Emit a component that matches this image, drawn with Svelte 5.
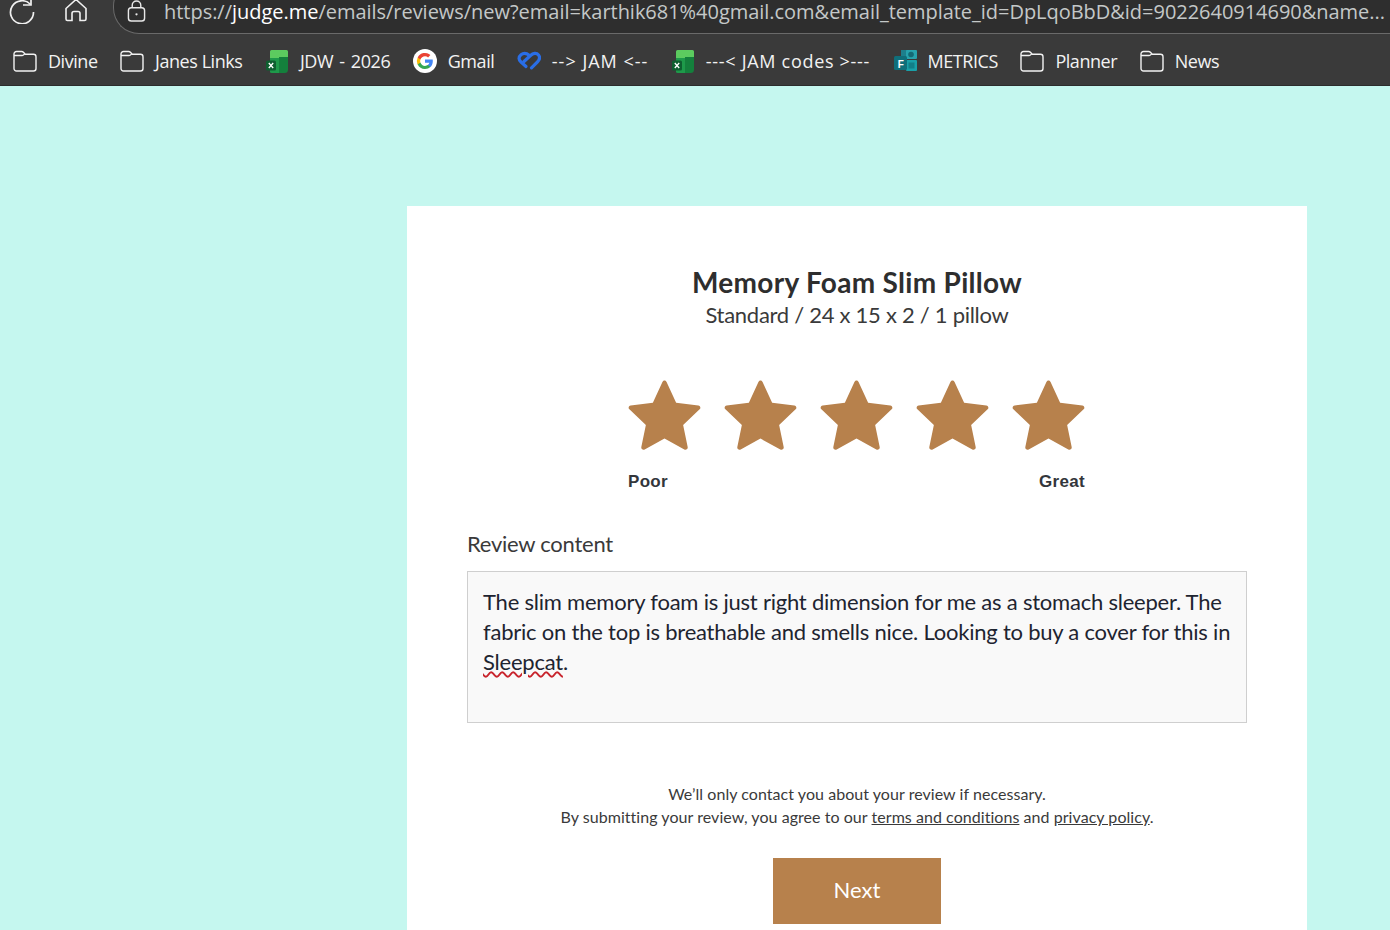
<script>
  const stars = [1, 2, 3, 4, 5];
</script>

{#snippet folder()}
  <svg class="bm-icon" viewBox="0 0 24 24" fill="none" stroke="#f2f2f2" stroke-width="1.4">
    <path d="M1 6.5V5a2.5 2.5 0 0 1 2.5-2.5h5.2c.7 0 1.2.3 1.7.8l1.900 1.900h8.200A2.500 2.500 0 0 1 23 7.700v11.800a2.500 2.500 0 0 1-2.500 2.500h-17A2.500 2.500 0 0 1 1 19.500V6.500h8.200c.8 0 1.300-.4 1.700-.9l1.400-1.400" />
  </svg>
{/snippet}

{#snippet excel()}
  <svg class="bm-icon" viewBox="0 0 24 24">
    <path d="M5 2.500A1.500 1.500 0 0 1 6.500 1H21.500A1.500 1.500 0 0 1 23 2.500V8H14v2H5z" fill="#5ccb5f" />
    <path d="M5 9h9v15H6.500A1.500 1.500 0 0 1 5 22.500z" fill="#1e9a4a" />
    <path d="M14 8h9v12.500a3.500 3.500 0 0 1-3.500 3.500H14z" fill="#14803c" />
    <rect x="1" y="11.500" width="10" height="10" rx="1.500" fill="#0e5f30" />
    <path d="M3.800 14l4.400 5M8.200 14l-4.400 5" stroke="#fff" stroke-width="1.300" />
  </svg>
{/snippet}

{#snippet star()}
  <svg class="star" viewBox="0 0 74 72">
    <path
      d="M37 1.500c1 0 1.700.6 2.100 1.500l9.700 21.200 22.500 2.600c2 .2 2.800 2.600 1.300 4L55.900 46.600 60.500 69c.4 2-1.700 3.400-3.400 2.400L37 60.400 16.900 71.400c-1.700 1-3.800-.4-3.400-2.400l4.600-22.400L1.400 30.800c-1.500-1.400-.7-3.800 1.300-4l22.500-2.600L34.900 3c.4-.9 1.100-1.500 2.100-1.500z"
      fill="#b7814c"
    />
  </svg>
{/snippet}

<div class="browser">
  <div class="toolbar">
    <svg class="nav-icon reload" viewBox="0 0 26 26" fill="none" stroke="#f0f0f0" stroke-width="1.700">
      <path d="M21.500 6.500A11.500 11.500 0 1 0 24.500 14" />
      <path d="M22 -1v8h-8" />
    </svg>
    <svg class="nav-icon home" viewBox="0 0 24 26" fill="none" stroke="#f0f0f0" stroke-width="1.600">
      <path d="M2 10.500 12 1.500l10 9V21a1.500 1.500 0 0 1-1.500 1.500h-4.500v-7a2 2 0 0 0-2-2h-4a2 2 0 0 0-2 2v7H3.500A1.500 1.500 0 0 1 2 21z" />
    </svg>
    <div class="address">
      <svg class="lock" viewBox="0 0 20 24" fill="none" stroke="#e8e8e8" stroke-width="1.500">
        <rect x="1.500" y="8" width="17" height="14" rx="3" />
        <path d="M5.500 8V5.500a4.500 4.500 0 0 1 9 0V8" />
        <circle cx="10" cy="15" r="1.200" fill="#e8e8e8" stroke="none" />
      </svg>
      <span class="url"><span class="dim">https://</span>judge.me<span class="dim">/emails/reviews/new?email=karthik681%40gmail.com&amp;email_template_id=DpLqoBbD&amp;id=9022640914690&amp;name...</span></span>
    </div>
  </div>

  <div class="bookmarks">
    <div class="bm">{@render folder()}<span>Divine</span></div>
    <div class="bm">{@render folder()}<span>Janes Links</span></div>
    <div class="bm">{@render excel()}<span class="jdw">JDW - 2026</span></div>
    <div class="bm">
      <svg class="bm-icon google" viewBox="0 0 24 24">
        <circle cx="12" cy="12" r="12" fill="#fff" />
        <path d="M19.800 12.200c0-.6 0-1.100-.1-1.600H12v3.100h4.400a3.800 3.800 0 0 1-1.600 2.400v2h2.600c1.500-1.400 2.400-3.400 2.400-5.900z" fill="#4285f4" />
        <path d="M12 20c2.200 0 4-.7 5.400-1.900l-2.600-2c-.7.500-1.700.8-2.800.8-2.100 0-3.900-1.400-4.600-3.400H4.700v2.100A8 8 0 0 0 12 20z" fill="#34a853" />
        <path d="M7.400 13.500a4.800 4.800 0 0 1 0-3V8.400H4.700a8 8 0 0 0 0 7.200z" fill="#fbbc05" />
        <path d="M12 7.200c1.200 0 2.300.4 3.100 1.200l2.300-2.300A8 8 0 0 0 4.700 8.400l2.700 2.100C8.100 8.600 9.900 7.200 12 7.200z" fill="#ea4335" />
      </svg>
      <span>Gmail</span>
    </div>
    <div class="bm">
      <svg class="bm-icon" viewBox="0 0 24 24" fill="none" stroke="#2a6ee6" stroke-width="3.200" stroke-linecap="round">
        <path d="M12.500 6.500C10 4.500 6.500 3.800 4 5.800 1.300 8 1.500 10.800 4 13l5 4.500" />
        <path d="M7 12.500 13.500 6.500c2.500-2.400 6-3 8-.5 1.800 2.300 1 4.800-1 6.800l-6 6" />
      </svg>
      <span class="spaced">--&gt; JAM &lt;--</span>
    </div>
    <div class="bm">{@render excel()}<span class="codes">---&lt; JAM codes &gt;---</span></div>
    <div class="bm">
      <svg class="bm-icon" viewBox="0 0 24 24">
        <rect x="8" y="1" width="9" height="9" fill="#1d7f8c" />
        <rect x="13" y="1" width="11" height="9" rx="1" fill="#27a3ad" />
        <circle cx="18" cy="5.500" r="2.800" fill="#146a75" />
        <rect x="13" y="11" width="11" height="11" rx="1" fill="#19a0a8" />
        <rect x="15.500" y="13.500" width="6" height="6" fill="#127f88" />
        <rect x="1" y="7" width="13" height="14" rx="1.500" fill="#0f6e7a" />
        <text x="7.500" y="18.500" class="f-mark">F</text>
      </svg>
      <span>METRICS</span>
    </div>
    <div class="bm">{@render folder()}<span>Planner</span></div>
    <div class="bm">{@render folder()}<span>News</span></div>
  </div>

  <main class="page">
    <section class="card">
      <header class="product">
        <h1>Memory Foam Slim Pillow</h1>
        <p>Standard / 24 x 15 x 2 / 1 pillow</p>
      </header>

      <div class="rating">
        <div class="stars">
          {#each stars as s (s)}
            {@render star()}
          {/each}
        </div>
        <div class="scale">
          <span>Poor</span>
          <span>Great</span>
        </div>
      </div>

      <div class="field-label">Review content</div>
      <div class="textarea">The slim memory foam is just right dimension for me as a stomach sleeper. The fabric on the top is breathable and smells nice. Looking to buy a cover for this in <span class="typo">Sleepcat</span>.</div>

      <div class="legal">
        <p>We’ll only contact you about your review if necessary.</p>
        <p>By submitting your review, you agree to our <u>terms and conditions</u> and <u>privacy policy</u>.</p>
      </div>

      <div class="actions">
        <button class="next">Next</button>
      </div>
    </section>
  </main>
</div>

<style>
  :global(body) {
    margin: 0;
    overflow: hidden;
  }

  .browser {
    width: 1390px;
    height: 930px;
    overflow: hidden;
    display: flex;
    flex-direction: column;
    font-family: "Lato", sans-serif;
  }

  /* Browser chrome */
  .toolbar {
    height: 43px;
    flex: none;
    background: #3a3a3a;
    display: flex;
    align-items: flex-start;
    padding-left: 9px;
    box-sizing: border-box;
    overflow: hidden;
  }

  .nav-icon {
    flex: none;
    margin-top: -2px;
  }

  .reload {
    width: 26px;
    height: 26px;
  }

  .home {
    width: 24px;
    height: 26px;
    margin-left: 29px;
  }

  .address {
    margin-left: 25px;
    margin-top: -20px;
    height: 54px;
    width: 1300px;
    flex: none;
    box-sizing: border-box;
    border: 1.5px solid #6a6a6a;
    border-right: none;
    border-radius: 26px 0 0 26px;
    background: #2e2e2e;
    display: flex;
    align-items: flex-end;
    padding: 0 0 8px 13px;
    color: #fff;
    overflow: hidden;
  }

  .lock {
    width: 19px;
    height: 23px;
    margin-bottom: 2px;
    flex: none;
  }

  .url {
    margin-left: 18px;
    font-family: "Open Sans", sans-serif;
    font-size: 20px;
    line-height: 26px;
    letter-spacing: -0.03px;
    white-space: nowrap;
  }

  .dim {
    color: #c4c8c8;
  }

  .bookmarks {
    height: 43px;
    flex: none;
    background: #3a3a3a;
    border-bottom: 1px solid #2c2c2c;
    box-sizing: border-box;
    display: flex;
    align-items: center;
    padding: 0 0 6px 13px;
    gap: 22.500px;
    color: #f2f2f2;
    font-family: "Open Sans", sans-serif;
    font-size: 18px;
    letter-spacing: -0.45px;
    white-space: nowrap;
  }

  .bm {
    display: flex;
    align-items: center;
    gap: 11px;
  }

  .jdw {
    word-spacing: 2px;
  }

  .spaced {
    letter-spacing: 1px;
  }

  .codes {
    letter-spacing: 0.7px;
  }

  .bm-icon {
    width: 24px;
    height: 24px;
    flex: none;
  }

  .f-mark {
    font-family: "Liberation Sans", sans-serif;
    font-size: 10px;
    font-weight: 700;
    fill: #fff;
    text-anchor: middle;
  }

  /* Page */
  .page {
    flex: 1;
    min-height: 0;
    background: #c5f7ef;
    padding: 120px 83px 0 407px;
    overflow: hidden;
  }

  .card {
    background: #fff;
    width: 900px;
    box-sizing: border-box;
    padding: 59px 60px 40px;
    color: #2f3136;
  }

  .product {
    text-align: center;
  }

  .product h1 {
    margin: 0;
    font-size: 28px;
    line-height: 34px;
    font-weight: 700;
    color: #2e2e2e;
    letter-spacing: 0.3px;
  }

  .product p {
    margin: 0;
    font-size: 22px;
    line-height: 32px;
    color: #3a3a3a;
    letter-spacing: -0.28px;
  }

  .rating {
    width: 457px;
    margin: 48px 0 0 161px;
  }

  .stars {
    display: flex;
    justify-content: space-between;
  }

  .star {
    width: 73px;
    height: 71px;
    display: block;
  }

  .scale {
    display: flex;
    justify-content: space-between;
    margin-top: 20px;
    font-family: "Liberation Sans", sans-serif;
    font-size: 17px;
    line-height: 24px;
    font-weight: 700;
    color: #33363b;
    letter-spacing: 0.3px;
  }

  .field-label {
    margin-top: 36px;
    font-size: 22px;
    line-height: 28px;
    color: #3a3a3a;
    letter-spacing: -0.25px;
  }

  .textarea {
    margin-top: 13px;
    height: 152px;
    box-sizing: border-box;
    border: 1px solid #cfcfcf;
    background: #f9f9f9;
    padding: 15px 10px 15px 15px;
    font-size: 22px;
    line-height: 30px;
    letter-spacing: -0.22px;
    color: #1e2430;
  }

  .typo {
    text-decoration: underline wavy #c8242c 1.5px;
    text-underline-offset: 1px;
  }

  .legal {
    margin-top: 59px;
    text-align: center;
    font-size: 16px;
    line-height: 23px;
    letter-spacing: 0.05px;
    color: #3a3a3a;
  }

  .legal p {
    margin: 0;
  }

  .actions {
    display: flex;
    justify-content: center;
    margin-top: 30px;
  }

  .next {
    width: 168px;
    height: 66px;
    border: none;
    padding: 0 0 3px;
    background: #b7814c;
    color: #fff;
    font-family: "Lato", sans-serif;
    font-size: 22px;
  }
</style>
